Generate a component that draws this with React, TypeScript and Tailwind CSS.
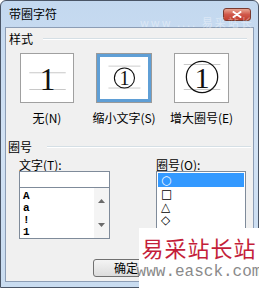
import React from "react";

const cjk = { fontFamily: '"Noto Sans CJK SC", "Liberation Sans", sans-serif' };

function Preview({ kind }: { kind: 0 | 1 | 2 }) {
  return (
    <svg width="100%" height="100%" viewBox="0 0 50 46">
      <line x1="8" y1={kind === 0 ? 18 : 10} x2="43" y2={kind === 0 ? 18 : 10} stroke="#c8c8c8" strokeWidth="1" />
      <line x1="8" y1="34" x2="43" y2="34" stroke="#c8c8c8" strokeWidth="1" />
      {kind === 0 && (
        <text x="25.5" y="35" textAnchor="middle" fontFamily="Liberation Serif, serif" fontSize="30" fill="#111">1</text>
      )}
      {kind === 1 && (
        <>
          <circle cx="25.5" cy="23" r="11" fill="none" stroke="#111" strokeWidth="1.2" />
          <text x="25.5" y="31" textAnchor="middle" fontFamily="Liberation Serif, serif" fontSize="22" fill="#111">1</text>
        </>
      )}
      {kind === 2 && (
        <>
          <circle cx="25.5" cy="22" r="15" fill="none" stroke="#111" strokeWidth="1.2" />
          <text x="25.5" y="33" textAnchor="middle" fontFamily="Liberation Serif, serif" fontSize="29" fill="#111">1</text>
        </>
      )}
    </svg>
  );
}

function Arrow({ up }: { up?: boolean }) {
  return (
    <svg width="7" height="4" viewBox="0 0 7 4">
      <polygon points={up ? "0,4 3.5,0 7,4" : "0,0 7,0 3.5,4"} fill="#6b6b6b" />
    </svg>
  );
}

export default function App() {
  return (
    <div className="relative w-[259px] h-[288px] overflow-hidden bg-white" style={cjk}>
      <div className="w-[259px] h-[288px] rounded-t-[6px] border border-[#4a5566] bg-gradient-to-b from-[#c3d8ef] via-[#d2e2f4] to-[#c9dcf0] flex flex-col">
        {/* title bar */}
        <div className="h-[26px] flex items-start justify-between pl-[8px] pr-[7px] pt-[5px] shrink-0">
          <span className="text-[12px] leading-[16px] text-black">带圈字符</span>
          <div className="w-[28px] h-[13px] rounded-[3px] border border-[#7a3a30] bg-gradient-to-b from-[#e8a593] via-[#d0574a] to-[#c23f2f] flex items-center justify-center mt-[2px]">
            <svg width="10" height="7" viewBox="0 0 10 7">
              <path d="M1.5 1 L8.5 6 M8.5 1 L1.5 6" stroke="#fff" strokeWidth="2" strokeLinecap="round" />
            </svg>
          </div>
        </div>
        {/* client */}
        <div className="mx-[4px] h-[255px] border border-[#8c9db5] bg-[#f0f0f0] flex flex-col">
          {/* 样式 */}
          <div className="flex items-center pl-[3px] pr-[6px] pt-[4px] h-[17px]">
            <span className="text-[12px] leading-[14px] text-black">样式</span>
            <div className="flex-1 ml-[10px] h-[2px] border-t border-[#d5dfe5] border-b border-b-white" />
          </div>
          <div className="flex pl-[14px] mt-[8px] gap-[22px]">
            <div className="flex flex-col items-center w-[54px]">
              <div className="w-[54px] h-[50px] bg-white border border-[#a0a0a0]">
                <Preview kind={0} />
              </div>
              <span className="mt-[8px] text-[12px] leading-[14px] whitespace-nowrap">无(N)</span>
            </div>
            <div className="flex flex-col items-center w-[56px]">
              <div className="w-[56px] h-[50px] bg-white border border-[#9a9a9a] p-0">
                <div className="w-full h-full border-[3px] border-[#5f9fd6] bg-white">
                  <Preview kind={1} />
                </div>
              </div>
              <span className="mt-[8px] text-[12px] leading-[14px] whitespace-nowrap">缩小文字(S)</span>
            </div>
            <div className="flex flex-col items-center w-[55px]">
              <div className="w-[55px] h-[50px] bg-white border border-[#a0a0a0]">
                <Preview kind={2} />
              </div>
              <span className="mt-[8px] text-[12px] leading-[14px] whitespace-nowrap">增大圈号(E)</span>
            </div>
          </div>
          {/* 圈号 */}
          <div className="flex items-center pl-[2px] pr-[2px] mt-[15px] h-[14px]">
            <span className="text-[12px] leading-[14px] text-black">圈号</span>
            <div className="flex-1 ml-[15px] h-[2px] border-t border-[#d5dfe5] border-b border-b-white" />
          </div>
          <div className="flex pl-[13px] mt-[4px]">
            <div className="flex flex-col w-[91px]">
              <span className="text-[12px] leading-[13px] whitespace-nowrap pl-[0px]">文字(T):</span>
              <div className="mt-[0px] h-[17px] bg-white border border-[#7f8b9a]" />
              <div className="h-[51px] bg-white border border-[#7f8b9a] border-t-0 flex">
                <div className="flex-1 flex flex-col pl-[3px] pt-[2px] text-[11px] leading-[12px] font-bold" style={{ fontFamily: '"Liberation Mono", monospace' }}>
                  <span>A</span>
                  <span>a</span>
                  <span>!</span>
                  <span>1</span>
                </div>
                <div className="w-[15px] bg-[#f4f4f4] flex flex-col items-center justify-between py-[11px]">
                  <Arrow up />
                  <Arrow />
                </div>
              </div>
            </div>
            <div className="flex flex-col ml-[46px] w-[90px]">
              <span className="text-[12px] leading-[13px] whitespace-nowrap">圈号(O):</span>
              <div className="h-[68px] bg-white border border-[#7f8b9a] flex flex-col pt-[1px] text-[12px] leading-[12px]" style={{ fontFamily: '"DejaVu Sans", sans-serif' }}>
                <div className="h-[14px] mx-[1px] bg-[#3399ff] text-white pl-[3px] flex items-center">○</div>
                <div className="h-[13px] pl-[4px] flex items-center">□</div>
                <div className="h-[13px] pl-[4px] flex items-center">△</div>
                <div className="h-[13px] pl-[4px] flex items-center">◇</div>
              </div>
            </div>
          </div>
          <div className="flex pl-[87px] mt-[20px]">
            <div className="w-[66px] h-[18px] rounded-[3px] border border-[#707070] bg-gradient-to-b from-[#f4f4f4] to-[#dcdcdc] flex items-center pl-[20px] text-[12px] leading-[14px]">
              确定
            </div>
          </div>
        </div>
      </div>
      {/* faint title watermark */}
      <div className="absolute left-[140px] top-[17px] text-[11px] leading-[11px] text-white/40 tracking-[2px] whitespace-nowrap">www .... 易采站长</div>
      {/* watermark overlay */}
      <div className="absolute left-[139px] top-[228px] w-[120px] h-[60px] bg-white flex flex-col items-center pt-[7px]">
        <span className="text-[22px] leading-[24px] text-[#c41e3a] tracking-[1px] whitespace-nowrap" style={{ fontFamily: '"Noto Sans CJK SC", serif' }}>易采站长站</span>
        <span className="mt-[4px] text-[16px] leading-[18px] text-[#8a8a8a] whitespace-nowrap tracking-[0px]" style={{ fontFamily: '"Liberation Mono", monospace' }}>www.easck.com</span>
      </div>
    </div>
  );
}
